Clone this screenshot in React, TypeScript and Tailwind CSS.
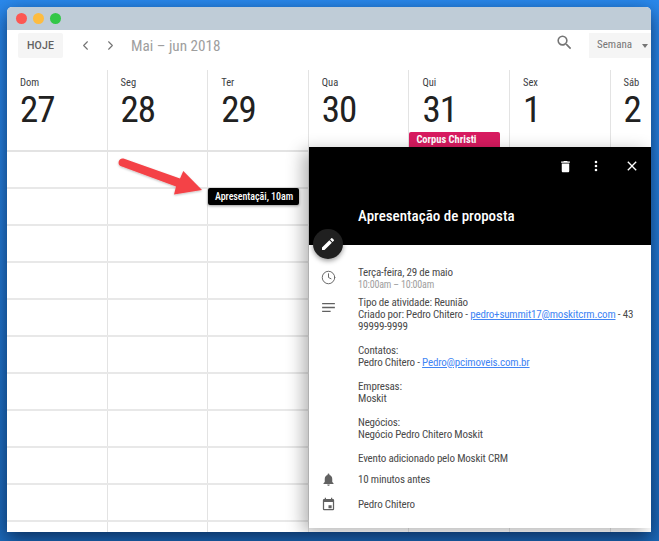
import React from 'react';
import { ChevronLeft, ChevronRight, Clock } from 'lucide-react';

const days = [
  { name: 'Dom', num: '27' },
  { name: 'Seg', num: '28' },
  { name: 'Ter', num: '29' },
  { name: 'Qua', num: '30' },
  { name: 'Qui', num: '31', event: 'Corpus Christi' },
  { name: 'Sex', num: '1' },
  { name: 'Sáb', num: '2' },
];

const rows = Array.from({ length: 11 }, (_, i) => i);

function Arrow() {
  return (
    <svg className="absolute left-[110px] top-[150px]" width="110" height="60" viewBox="110 150 110 60">
      <defs>
        <filter id="arrowShadow" x="-20%" y="-30%" width="140%" height="170%">
          <feDropShadow dx="0" dy="1" stdDeviation="1" floodColor="#000" floodOpacity="0.25" />
        </filter>
      </defs>
      <g filter="url(#arrowShadow)" fill="#f44347">
        <path d="M123.500 158.500 180 178.500 183.300 171 202 190 174 194.500 176 186.500 120.500 166C117 164 118.500 157.500 123.500 158.500z" />
      </g>
    </svg>
  );
}

function Popup() {
  return (
    <div className="absolute left-[302px] top-[140px] w-[342px] h-[381px] bg-white shadow-[-6px_4px_16px_rgba(0,0,0,0.3)] flex flex-col">
      <div className="h-[98px] bg-black shrink-0 relative">
        <div className="flex items-center justify-end h-[38px] text-white">
          <svg width="15" height="15" viewBox="0 0 24 24" fill="#fff" className="mr-[16px]">
            <path d="M6 19c0 1.100.9 2 2 2h8c1.100 0 2-.9 2-2V7H6v12zM19 4h-3.500l-1-1h-5l-1 1H5v2h14V4z" />
          </svg>
          <svg width="14" height="14" viewBox="0 0 24 24" fill="#fff" className="mr-[21px]">
            <circle cx="12" cy="5" r="2.200" />
            <circle cx="12" cy="12" r="2.200" />
            <circle cx="12" cy="19" r="2.200" />
          </svg>
          <svg width="16" height="16" viewBox="0 0 24 24" fill="#fff" className="mr-[11px]">
            <path d="M19 6.410 17.590 5 12 10.590 6.410 5 5 6.410 10.590 12 5 17.590 6.410 19 12 13.410 17.590 19 19 17.590 13.410 12z" />
          </svg>
        </div>
        <div className="pl-[49px] pt-[22px] text-white text-[15px] leading-[18px] font-medium [font-stretch:75%]">
          Apresentação de proposta
        </div>
        <div className="absolute left-[4px] top-[82px] w-[30px] h-[30px] rounded-full bg-[#202020] shadow-[0_2px_5px_rgba(0,0,0,0.4)] flex items-center justify-center">
          <svg width="16" height="16" viewBox="0 0 24 24" fill="#fff">
            <path d="M3 17.250V21h3.750L17.810 9.940l-3.750-3.750L3 17.250zM20.710 7.040a1 1 0 0 0 0-1.410l-2.340-2.340a1 1 0 0 0-1.410 0l-1.830 1.830 3.750 3.750 1.830-1.830z" />
          </svg>
        </div>
      </div>

      <div className="flex-1 pt-[22px] flex flex-col text-[11px] tracking-[-0.18px] leading-[12px] text-[#4a4a4a] [font-stretch:75%]">
        <div className="flex">
          <div className="w-[49px] shrink-0 flex justify-center pr-[11px] pt-[3px]">
            <Clock size={15} strokeWidth={1.500} className="text-[#616161]" />
          </div>
          <div>
            <div>Terça-feira, 29 de maio</div>
            <div className="text-[10px] text-[#9e9e9e]">10:00am – 10:00am</div>
          </div>
        </div>

        <div className="flex mt-[6px]">
          <div className="w-[49px] shrink-0 flex justify-center pr-[11px] pt-[2px]">
            <svg width="17" height="17" viewBox="0 0 24 24" fill="#616161">
              <path d="M3 5.500h18v2H3zM3 11h18v2H3zM3 16.500h12v2H3z" />
            </svg>
          </div>
          <div className="w-[283px]">
            <div>Tipo de atividade: Reunião</div>
            <div>
              Criado por: Pedro Chitero - <a className="text-[#4285f4] underline">pedro+summit17@moskitcrm.com</a> - 43 99999-9999
            </div>
            <div className="mt-[12px]">Contatos:</div>
            <div>
              Pedro Chitero - <a className="text-[#4285f4] underline">Pedro@pcimoveis.com.br</a>
            </div>
            <div className="mt-[12px]">Empresas:</div>
            <div>Moskit</div>
            <div className="mt-[12px]">Negócios:</div>
            <div>Negócio Pedro Chitero Moskit</div>
            <div className="mt-[12px]">Evento adicionado pelo Moskit CRM</div>
          </div>
        </div>

        <div className="flex mt-[7px] items-center">
          <div className="w-[49px] shrink-0 flex justify-center pr-[11px]">
            <svg width="15" height="15" viewBox="0 0 24 24" fill="#616161">
              <path d="M12 22c1.100 0 2-.9 2-2h-4c0 1.100.9 2 2 2zm6-6v-5c0-3.070-1.640-5.640-4.500-6.320V4a1.500 1.500 0 0 0-3 0v.68C7.630 5.360 6 7.920 6 11v5l-2 2v1h16v-1l-2-2z" />
            </svg>
          </div>
          <div>10 minutos antes</div>
        </div>

        <div className="flex mt-[10px] items-center">
          <div className="w-[49px] shrink-0 flex justify-center pr-[11px]">
            <svg width="15" height="15" viewBox="0 0 24 24" fill="#616161">
              <path d="M19 3h-1V1h-2v2H8V1H6v2H5a2 2 0 0 0-2 2v14a2 2 0 0 0 2 2h14a2 2 0 0 0 2-2V5a2 2 0 0 0-2-2zm0 16H5V8h14v11zm-2-6h-5v5h5v-5z" />
            </svg>
          </div>
          <div>Pedro Chitero</div>
        </div>
      </div>
    </div>
  );
}

export default function App() {
  return (
    <div className="w-[659px] h-[541px] overflow-hidden bg-gradient-to-b from-[#2a89ec] to-[#1c69b8] pt-[7px] pl-[7px] pr-[8px] pb-[9px] [font-family:Roboto,sans-serif]">
      <div className="relative h-full bg-white rounded-t-[5px] overflow-hidden shadow-[0_6px_18px_rgba(5,25,60,0.75)]">
        <div className="h-[23px] bg-[#bfccd7] flex items-center pl-[9px] gap-[6px]">
          <span className="w-[11px] h-[11px] rounded-full bg-[#fc5753]" />
          <span className="w-[11px] h-[11px] rounded-full bg-[#fdbc40]" />
          <span className="w-[11px] h-[11px] rounded-full bg-[#33c748]" />
        </div>

        <div className="h-[40px] flex items-start pt-[3px] pl-[11px]">
          <div className="w-[45px] h-[25px] bg-[#f5f5f5] rounded-[2px] flex items-center justify-center text-[10.500px] font-medium text-[#616161] tracking-[0.2px]">
            HOJE
          </div>
          <ChevronLeft size={15} strokeWidth={1.750} className="text-[#757575] ml-[15px] mt-[5px]" />
          <ChevronRight size={15} strokeWidth={1.750} className="text-[#757575] ml-[10px] mt-[5px]" />
          <div className="ml-[13px] mt-[3px] text-[15.200px] leading-[20px] text-[#9e9e9e] [font-stretch:75%]">Mai – jun 2018</div>
          <svg width="19" height="19" viewBox="0 0 24 24" fill="#757575" className="ml-auto mr-[15px]">
            <path d="M15.500 14h-.79l-.28-.27A6.470 6.470 0 0 0 16 9.500 6.500 6.500 0 1 0 9.500 16c1.610 0 3.090-.59 4.230-1.570l.27.28v.79l5 4.990L20.490 19l-4.990-5zm-6 0C7.010 14 5 11.990 5 9.500S7.010 5 9.500 5 14 7.010 14 9.500 11.990 14 9.500 14z" />
          </svg>
          <div className="w-[62px] h-[25px] bg-[#f5f5f5] flex items-center pl-[8px] text-[11px] text-[#757575] [font-stretch:75%]">
            Semana
            <span className="ml-[10px] w-0 h-0 border-x-[3.500px] border-x-transparent border-t-[4px] border-t-[#757575]" />
          </div>
        </div>

        <div className="grid grid-cols-[repeat(7,100.6px)] h-[82px] border-b-2 border-[#e3e3e3]">
          {days.map((d) => (
            <div key={d.name} className="relative pt-[7px] pl-[13px] border-r border-[#e3e3e3]">
              <div className="text-[10.500px] leading-[12px] text-[#3c4043] [font-stretch:75%]">{d.name}</div>
              <div className="text-[37px] tracking-[-1px] leading-[40px] text-[#212121] [font-stretch:75%] mt-[1px]">{d.num}</div>
              {d.event && (
                <div className="absolute left-0 top-[62px] w-[91px] h-[16px] rounded-t-[2px] bg-[#d81b60] text-white text-[10.500px] leading-[16px] font-bold pl-[7px] [font-stretch:75%]">
                  {d.event}
                </div>
              )}
            </div>
          ))}
        </div>

        <div className="flex flex-col">
          {rows.map((r) => (
            <div key={r} className="grid grid-cols-[repeat(7,100.6px)] h-[37px] border-b-2 border-[#e8e8e8]">
              {days.map((d) => (
                <div key={d.name} className="border-r border-[#e3e3e3]" />
              ))}
            </div>
          ))}
        </div>

        <div className="absolute left-[201px] top-[181px] w-[91px] h-[17px] bg-black rounded-[2px] shadow-[0_1px_3px_rgba(0,0,0,0.4)] pl-[7px] text-white text-[10px] tracking-[-0.05px] leading-[17px] font-medium [font-stretch:75%]">
          Apresentaçãi, 10am
        </div>

        <div className="absolute -left-[7px] -top-[7px]">
          <Arrow />
        </div>

        <Popup />
      </div>
    </div>
  );
}
